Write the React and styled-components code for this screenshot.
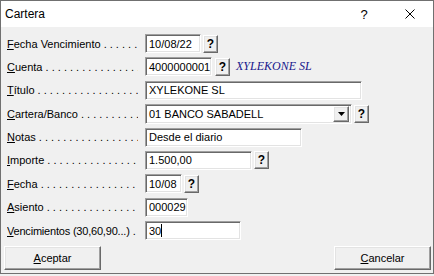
import React from "react";
import styled, { createGlobalStyle } from "styled-components";

const GlobalStyle = createGlobalStyle`
  html, body {
    margin: 0;
    padding: 0;
    background: #f0f0f0;
  }
  body {
    font-family: "Liberation Sans", Arial, sans-serif;
    font-size: 11px;
    color: #000;
  }
`;

const Window = styled.div`
  width: 434px;
  height: 274px;
  box-sizing: border-box;
  border: 1px solid #707070;
  background: #f0f0f0;
  display: flex;
  flex-direction: column;
`;

const TitleBar = styled.div`
  height: 26px;
  flex: none;
  background: #fff;
  display: flex;
  align-items: center;
  padding-left: 4px;
  font-size: 12px;
`;

const TitleHelp = styled.span`
  margin-left: auto;
  font-size: 13px;
  width: 46px;
  text-align: center;
`;

const CloseBox = styled.span`
  width: 46px;
  height: 26px;
  display: flex;
  align-items: center;
  justify-content: center;
`;

const Body = styled.div`
  flex: 1;
  display: flex;
  flex-direction: column;
  padding: 7px 2px 3px 3px;
`;

const Form = styled.div`
  padding-left: 3px;
  display: flex;
  flex-direction: column;
`;

const Row = styled.div`
  height: 23.375px;
  display: grid;
  grid-template-columns: 138px auto;
  align-items: start;
`;

const Label = styled.div`
  height: 19px;
  display: flex;
  align-items: center;
  white-space: nowrap;
  overflow: hidden;
  padding-right: 7px;

  u {
    text-decoration-thickness: 1px;
    text-underline-offset: 1px;
  }
`;

const LabelText = styled.span`
  letter-spacing: ${(p) => (p.$tight ? "-0.2px" : "normal")};
`;

const Leader = styled.span`
  flex: 1;
  overflow: hidden;
  white-space: pre;
`;

const Controls = styled.div`
  display: flex;
  align-items: center;
  gap: ${(p) => p.$gap || 2}px;
`;

const Field = styled.div`
  width: ${(p) => p.$w}px;
  height: ${(p) => p.$h || 19}px;
  box-sizing: border-box;
  background: #fff;
  border-style: solid;
  border-width: 1px;
  border-color: #a0a0a0 #fff #fff #a0a0a0;
  box-shadow: inset 1px 1px 0 #696969, inset -1px -1px 0 #e3e3e3;
  display: flex;
  align-items: center;
  padding: 0 2px 0 3px;
  white-space: nowrap;
  overflow: hidden;
`;

const Caret = styled.span`
  display: inline-block;
  width: 1px;
  height: 13px;
  background: #000;
`;

const raised = `
  box-sizing: border-box;
  background: #f0f0f0;
  border-style: solid;
  border-width: 1px;
  border-color: #fff #696969 #696969 #fff;
  box-shadow: inset -1px -1px 0 #a0a0a0, inset 1px 1px 0 #e3e3e3;
`;

const HelpButton = styled.div`
  ${raised}
  width: 15px;
  height: 18px;
  display: flex;
  align-items: center;
  justify-content: center;
  font-weight: bold;
  font-size: 12px;
`;

const DropButton = styled.div`
  ${raised}
  width: 16px;
  height: 16px;
  margin-left: auto;
  display: flex;
  align-items: center;
  justify-content: center;
`;

const Company = styled.span`
  font-family: "Liberation Serif", "Times New Roman", serif;
  font-style: italic;
  font-size: 12px;
  color: #16168c;
  margin-left: 3px;
`;

const Footer = styled.div`
  margin-top: auto;
  display: flex;
  justify-content: space-between;
`;

const Button = styled.div`
  ${raised}
  width: 97px;
  height: 24px;
  display: flex;
  align-items: center;
  justify-content: center;

  u {
    text-decoration-thickness: 1px;
    text-underline-offset: 1px;
  }
`;

const DOTS = " .".repeat(40);

function FieldLabel({ first, rest, tight }) {
  return (
    <Label>
      <LabelText $tight={tight}>
        <u>{first}</u>
        {rest}
      </LabelText>
      <Leader>{DOTS}</Leader>
    </Label>
  );
}

const Help = () => <HelpButton>?</HelpButton>;

export default function App() {
  return (
    <>
      <GlobalStyle />
      <Window>
        <TitleBar>
          <span>Cartera</span>
          <TitleHelp>?</TitleHelp>
          <CloseBox>
            <svg width="10" height="10" viewBox="0 0 10 10">
              <path d="M0.5 0.5 L9.5 9.5 M9.5 0.5 L0.5 9.5" stroke="#000" strokeWidth="1" fill="none" />
            </svg>
          </CloseBox>
        </TitleBar>
        <Body>
          <Form>
            <Row>
              <FieldLabel first="F" rest="echa Vencimiento" />
              <Controls>
                <Field $w={56}>10/08/22</Field>
                <Help />
              </Controls>
            </Row>
            <Row>
              <FieldLabel first="C" rest="uenta" />
              <Controls $gap={3}>
                <Field $w={67}>4000000001</Field>
                <Help />
                <Company>XYLEKONE SL</Company>
              </Controls>
            </Row>
            <Row>
              <FieldLabel first="T" rest="ítulo" />
              <Controls>
                <Field $w={217}>XYLEKONE SL</Field>
              </Controls>
            </Row>
            <Row>
              <FieldLabel first="C" rest="artera/Banco" />
              <Controls>
                <Field $w={207} $h={20}>
                  01 BANCO SABADELL
                  <DropButton>
                    <svg width="7" height="4" viewBox="0 0 7 4">
                      <path d="M0 0 H7 L3.5 4 Z" fill="#000" />
                    </svg>
                  </DropButton>
                </Field>
                <Help />
              </Controls>
            </Row>
            <Row>
              <FieldLabel first="N" rest="otas" />
              <Controls>
                <Field $w={157}>Desde el diario</Field>
              </Controls>
            </Row>
            <Row>
              <FieldLabel first="I" rest="mporte" />
              <Controls>
                <Field $w={107}>1.500,00</Field>
                <Help />
              </Controls>
            </Row>
            <Row>
              <FieldLabel first="F" rest="echa" />
              <Controls>
                <Field $w={37}>10/08</Field>
                <Help />
              </Controls>
            </Row>
            <Row>
              <FieldLabel first="A" rest="siento" />
              <Controls>
                <Field $w={43}>000029</Field>
              </Controls>
            </Row>
            <Row>
              <FieldLabel first="V" rest="encimientos (30,60,90...)" tight />
              <Controls>
                <Field $w={96}>
                  30
                  <Caret />
                </Field>
              </Controls>
            </Row>
          </Form>
          <Footer>
            <Button>
              <span>
                <u>A</u>ceptar
              </span>
            </Button>
            <Button>
              <span>
                <u>C</u>ancelar
              </span>
            </Button>
          </Footer>
        </Body>
      </Window>
    </>
  );
}
